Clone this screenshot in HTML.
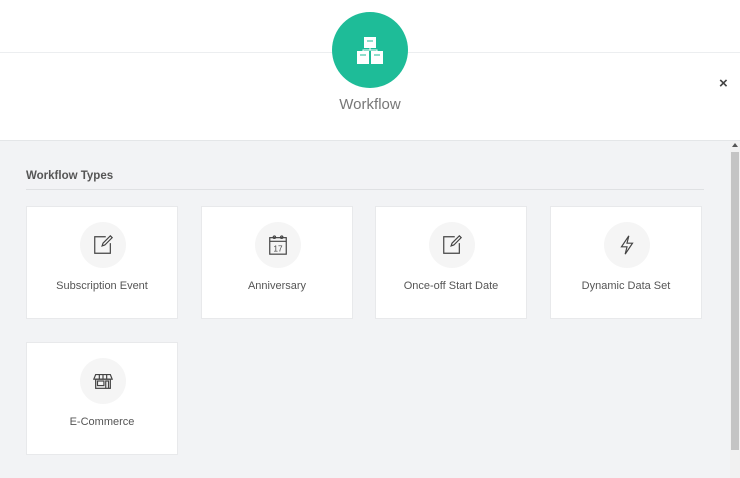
<!DOCTYPE html>
<html><head><style>
*{margin:0;padding:0;box-sizing:border-box}
body{width:740px;height:478px;overflow:hidden;background:#fff;font-family:"Liberation Sans",sans-serif;position:relative}
.topline{position:absolute;left:0;right:0;top:52px;border-top:1px solid #eceef0}
.circle{position:absolute;left:332px;top:12px;width:76px;height:76px;border-radius:50%;background:#1ebc98}
.title{position:absolute;left:0;width:740px;top:96px;text-align:center;font-size:15px;color:#777}
.close{position:absolute;left:719px;top:75px;font-size:15px;color:#444;font-weight:bold}
.gray{position:absolute;left:0;top:140px;width:740px;height:338px;background:#f2f3f5;border-top:1px solid #e4e6e8}
.sb{position:absolute;left:730px;top:141px;width:10px;height:337px;background:#f1f1f1}
.thumb{position:absolute;left:731px;top:152px;width:8px;height:298px;background:#c4c4c4}
.arrow{position:absolute;left:731px;top:143px;width:0;height:0;border-left:3px solid transparent;border-right:3px solid transparent;border-bottom:4px solid #555;margin-left:1px}
h3{position:absolute;left:26px;top:170px;font-size:11.5px;color:#555;font-weight:bold}
.hl{position:absolute;left:26px;top:189px;width:678px;border-top:1px solid #dfe1e3}
.card{position:absolute;width:152px;height:113px;background:#fff;border:1px solid #e8e9eb}
.ic{position:absolute;left:53px;top:15px;width:46px;height:46px;border-radius:50%;background:#f5f5f5}
.ic svg{position:absolute;left:12px;top:12px}
.lb{position:absolute;left:0;right:0;top:73px;text-align:center;font-size:11px;color:#555}
</style></head><body>
<div class="topline"></div>
<div class="circle"><svg width="76" height="76" viewBox="0 0 76 76"><g fill="#fff"><rect x="32" y="25" width="12" height="11"/><rect x="25" y="39" width="12" height="13"/><rect x="39" y="39" width="12" height="13"/></g><g stroke="#1ebc98" stroke-width="1"><line x1="35" y1="29" x2="41" y2="29"/><line x1="28" y1="43" x2="34" y2="43"/><line x1="42" y1="43" x2="48" y2="43"/></g><path d="M38 36v2M31 39v-1h14v1" stroke="#fff" fill="none"/></svg></div>
<div class="title">Workflow</div>
<div class="close">×</div>
<div class="gray"></div>
<div class="sb"></div><div class="thumb"></div><div class="arrow"></div>
<h3>Workflow Types</h3>
<div class="hl"></div>

<div class="card" style="left:26px;top:206px"><div class="ic"><svg width="22" height="22" viewBox="0 0 24 24" fill="none" stroke="#444" stroke-width="1.3"><path d="M15 3H3v18h17V10"/><path d="M20 2l2 2-8 8-3 1 1-3z"/></svg></div><div class="lb">Subscription Event</div></div>
<div class="card" style="left:201px;top:206px"><div class="ic"><svg width="22" height="22" viewBox="0 0 24 24" fill="none" stroke="#444" stroke-width="1.3"><rect x="3" y="4" width="18" height="18"/><line x1="3" y1="8" x2="21" y2="8"/><circle cx="8" cy="3.5" r="1.3"/><circle cx="16" cy="3.5" r="1.3"/><text x="12" y="19" font-size="9" text-anchor="middle" fill="#444" stroke="none" font-family="Liberation Sans">17</text></svg></div><div class="lb">Anniversary</div></div>
<div class="card" style="left:375px;top:206px"><div class="ic"><svg width="22" height="22" viewBox="0 0 24 24" fill="none" stroke="#444" stroke-width="1.3"><path d="M15 3H3v18h17V10"/><path d="M20 2l2 2-8 8-3 1 1-3z"/></svg></div><div class="lb">Once-off Start Date</div></div>
<div class="card" style="left:550px;top:206px"><div class="ic"><svg width="22" height="22" viewBox="0 0 24 24" fill="none" stroke="#444" stroke-width="1.3"><path d="M14 2L6 14h6l-2 8 8-12h-6z"/></svg></div><div class="lb">Dynamic Data Set</div></div>
<div class="card" style="left:26px;top:342px"><div class="ic"><svg width="22" height="22" viewBox="0 0 24 24" fill="none" stroke="#444" stroke-width="1.3"><path d="M4 5h16l2 5H2z"/><path d="M8 5v5M12 5v5M16 5v5"/><rect x="4" y="10" width="16" height="10"/><rect x="6" y="12" width="7" height="5"/><path d="M15 20v-8h3v8"/></svg></div><div class="lb">E-Commerce</div></div>
</body></html>
